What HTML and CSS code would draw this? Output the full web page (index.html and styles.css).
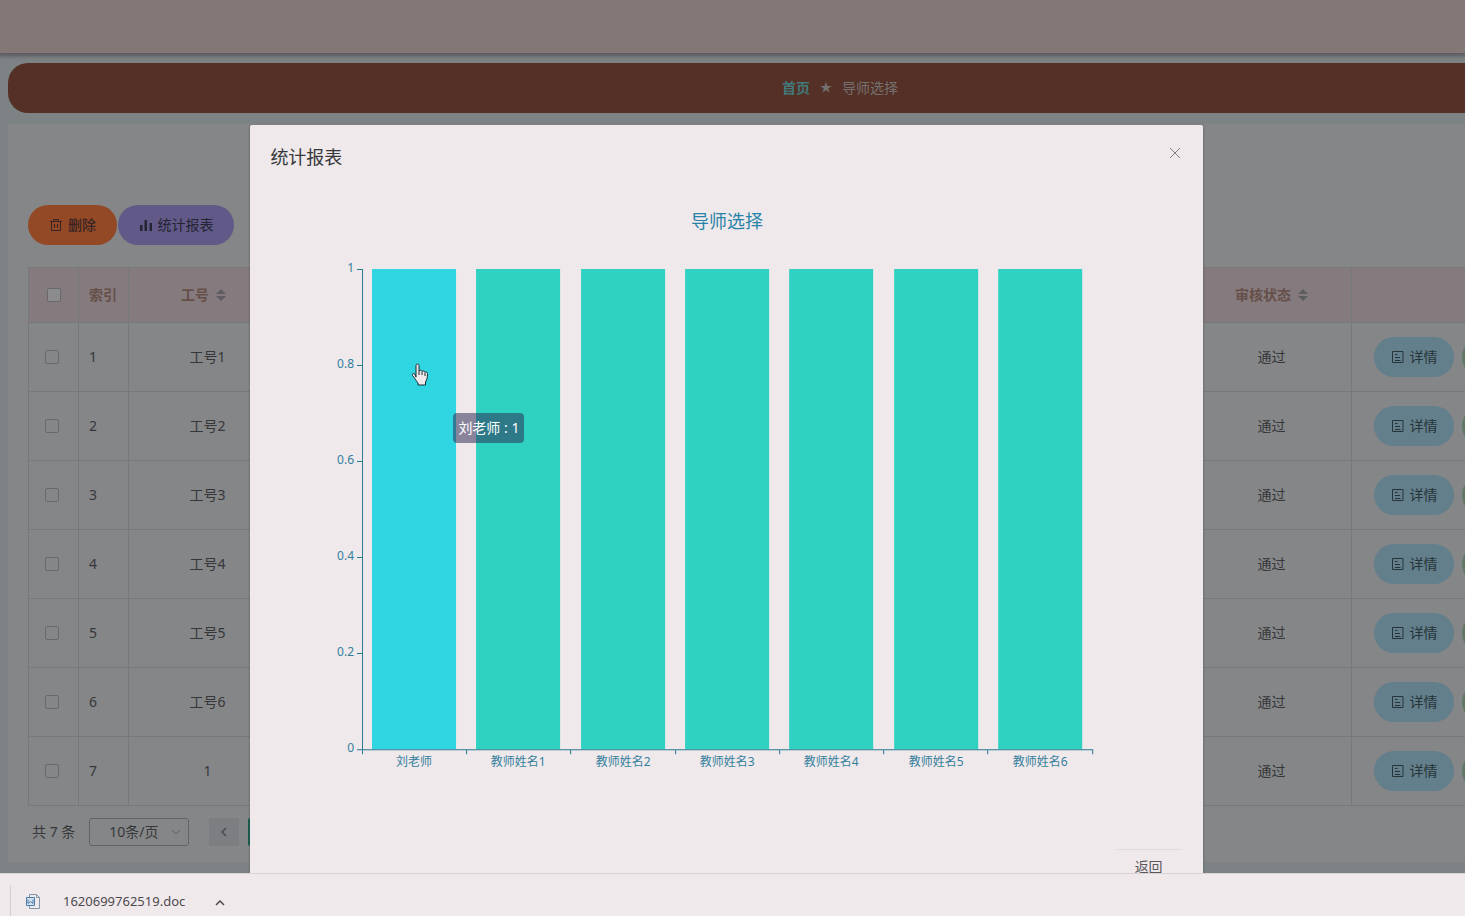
FILE: index.html
```html
<!DOCTYPE html>
<html lang="zh-CN">
<head>
<meta charset="utf-8">
<title>导师选择</title>
<link rel="stylesheet" href="styles.css">
</head>
<body>
<svg width="0" height="0" class="defs" aria-hidden="true">
  <symbol id="doc" viewBox="0 0 14 14"><path d="M1.500 1.500h10.500v11H1.500zM4 4.500h2.500M4 7.500h5M4 10.500h5.500" fill="none" stroke="currentColor"/></symbol>
  <symbol id="sort" viewBox="0 0 10 14"><path d="M0 6l5-5 5 5zM0 8l5 5 5-5z" fill="currentColor"/></symbol>
</svg>
<div class="viewport">
  <header class="topbar"></header>
  <main class="page">
    <nav class="crumbs"><a href="#" class="home">首页</a><span class="star">★</span><span>导师选择</span></nav>
    <section class="card">
      <div class="actions">
        <button class="btn delete"><svg width="14" height="14" viewBox="0 0 14 14"><path d="M1 3.500h12M4.500 3.500v-2h5v2M2.500 3.500v9h9v-9M5.500 6v4M8.500 6v4" fill="none" stroke="currentColor"/></svg>删除</button>
        <button class="btn report"><svg width="14" height="14" viewBox="0 0 14 14"><path d="M1 7h2.500v6H1zM5.500 2H8v11H5.500zM10.500 5H13v8h-2.500z" fill="currentColor"/></svg>统计报表</button>
      </div>
      <table class="grid">
        <colgroup><col class="c-check"><col class="c-index"><col class="c-no"><col><col class="c-state"><col class="c-ops"></colgroup>
        <thead><tr><th class="check"><input type="checkbox" aria-label="全选"></th><th class="index">索引</th><th class="no">工号<svg class="sort" width="10" height="14"><use href="#sort"/></svg></th><th></th><th>审核状态<svg class="sort" width="10" height="14"><use href="#sort"/></svg></th><th></th></tr></thead>
        <tbody>
          <tr><td class="check"><input type="checkbox" aria-label="1"></td><td class="index">1</td><td>工号1</td><td></td><td>通过</td><td class="ops"><div class="ops-row"><button class="btn detail"><svg width="14" height="14"><use href="#doc"/></svg>详情</button><button class="btn edit" aria-label="修改"></button></div></td></tr>
          <tr><td class="check"><input type="checkbox" aria-label="2"></td><td class="index">2</td><td>工号2</td><td></td><td>通过</td><td class="ops"><div class="ops-row"><button class="btn detail"><svg width="14" height="14"><use href="#doc"/></svg>详情</button><button class="btn edit" aria-label="修改"></button></div></td></tr>
          <tr><td class="check"><input type="checkbox" aria-label="3"></td><td class="index">3</td><td>工号3</td><td></td><td>通过</td><td class="ops"><div class="ops-row"><button class="btn detail"><svg width="14" height="14"><use href="#doc"/></svg>详情</button><button class="btn edit" aria-label="修改"></button></div></td></tr>
          <tr><td class="check"><input type="checkbox" aria-label="4"></td><td class="index">4</td><td>工号4</td><td></td><td>通过</td><td class="ops"><div class="ops-row"><button class="btn detail"><svg width="14" height="14"><use href="#doc"/></svg>详情</button><button class="btn edit" aria-label="修改"></button></div></td></tr>
          <tr><td class="check"><input type="checkbox" aria-label="5"></td><td class="index">5</td><td>工号5</td><td></td><td>通过</td><td class="ops"><div class="ops-row"><button class="btn detail"><svg width="14" height="14"><use href="#doc"/></svg>详情</button><button class="btn edit" aria-label="修改"></button></div></td></tr>
          <tr><td class="check"><input type="checkbox" aria-label="6"></td><td class="index">6</td><td>工号6</td><td></td><td>通过</td><td class="ops"><div class="ops-row"><button class="btn detail"><svg width="14" height="14"><use href="#doc"/></svg>详情</button><button class="btn edit" aria-label="修改"></button></div></td></tr>
          <tr><td class="check"><input type="checkbox" aria-label="7"></td><td class="index">7</td><td>1</td><td></td><td>通过</td><td class="ops"><div class="ops-row"><button class="btn detail"><svg width="14" height="14"><use href="#doc"/></svg>详情</button><button class="btn edit" aria-label="修改"></button></div></td></tr>
        </tbody>
      </table>
      <div class="pager">
        <span>共 7 条</span>
        <div class="size"><select aria-label="每页条数"><option>10条/页</option></select><svg width="10" height="6" viewBox="0 0 10 6"><path d="M1 1l4 4 4-4" fill="none" stroke="currentColor"/></svg></div>
        <button class="prev" aria-label="上一页"><svg width="8" height="10" viewBox="0 0 8 10"><path d="M6 1L2 5l4 4" fill="none" stroke="currentColor" stroke-width="1.500"/></svg></button>
        <button class="current" aria-label="第一页"></button>
      </div>
    </section>
  </main>

  <div class="modal" role="dialog" aria-labelledby="modal-title">
    <div class="modal-head">
      <h2 id="modal-title">统计报表</h2>
      <button class="close" aria-label="关闭"><svg width="12" height="12" viewBox="0 0 12 12"><path d="M1 1l10 10M11 1L1 11" stroke="currentColor"/></svg></button>
    </div>
    <div class="modal-body">
      <svg class="chart" viewBox="0 0 912 600" role="img" aria-label="导师选择">
        <text class="chart-title" x="457" y="19">导师选择</text>
        <rect class="bar active" x="102" y="60" width="84" height="480"/>
        <g class="bar">
          <rect x="206" y="60" width="84" height="480"/><rect x="311" y="60" width="84" height="480"/><rect x="415" y="60" width="84" height="480"/>
          <rect x="519" y="60" width="84" height="480"/><rect x="624" y="60" width="84" height="480"/><rect x="728" y="60" width="84" height="480"/>
        </g>
        <path class="axis" d="M92.500 60V545M87 60.500h5M87 156.500h5M87 252.500h5M87 348.500h5M87 444.500h5M87 540.500h736M196.500 540v5M300.500 540v5M405.500 540v5M509.500 540v5M613.500 540v5M717.500 540v5M822.500 540v5"/>
        <g class="values"><text x="84" y="63">1</text><text x="84" y="159">0.8</text><text x="84" y="255">0.6</text><text x="84" y="351">0.4</text><text x="84" y="447">0.2</text><text x="84" y="543">0</text></g>
        <g class="names"><text x="144" y="557">刘老师</text><text x="248" y="557">教师姓名1</text><text x="353" y="557">教师姓名2</text><text x="457" y="557">教师姓名3</text><text x="561" y="557">教师姓名4</text><text x="666" y="557">教师姓名5</text><text x="770" y="557">教师姓名6</text></g>
      </svg>
      <div class="tooltip">刘老师 : 1</div>
      <svg class="cursor" width="18" height="23" viewBox="0 0 18 23"><path d="M5 14V2.500c0-2 3-2 3 0V8c.5-1.200 2.700-1 3 .5.700-1 2.700-.6 2.800.8 1-.7 2.700-.2 2.700 1.200 0 4-.5 6-2 8.500V22H7v-2c-2-2-3-5-5.500-7.500-.8-1.500 1-2.700 2.200-1.500z" fill="#efe9eb" stroke="#172d35"/><path d="M8 8v4M11 9v3M14 10v3" stroke="#172d35"/></svg>
    </div>
    <div class="modal-foot"><button class="back">返回</button></div>
  </div>
</div>
<footer class="downloads">
  <a href="#" class="file"><svg width="15" height="17" viewBox="0 0 15 17"><path d="M3.500 4V1.500h7l3 3v11h-10V13M10.500 1.500v3h3" fill="none" stroke="#8297ac"/><path d="M.5 4.500h8v8h-8z" fill="#d3e1ee" stroke="#4d7dab"/><path d="M2 6.500v4l2.500-2 2.500 2v-4" fill="none" stroke="#4d7dab"/></svg>1620699762519.doc</a>
  <button class="more" aria-label="更多"><svg width="10" height="6" viewBox="0 0 10 6"><path d="M1 5l4-4 4 4" fill="none" stroke="currentColor" stroke-width="1.500"/></svg></button>
</footer>
</body>
</html>
```
FILE: styles.css
```css
* { box-sizing: border-box; }
body {
  margin: 0;
  height: 100vh;
  display: flex;
  flex-direction: column;
  overflow: hidden;
  font: 14px/20px "Noto Sans", "Noto Sans CJK SC", sans-serif;
  color: #36373a;
}
button, select, input { font: inherit; color: inherit; margin: 0; }
button { border: 0; padding: 0; background: none; }
a { color: inherit; text-decoration: none; }
.defs { position: absolute; }
.viewport { flex: 1; min-height: 0; position: relative; overflow: hidden; background: #7d8384; }
.topbar { height: 53px; background: #847877; box-shadow: 0 1px 4px 2px #58585d; }
.page { min-width: 1680px; padding: 10px 8px 0; }
.crumbs {
  height: 50px;
  display: flex;
  align-items: center;
  justify-content: center;
  gap: 10px;
  border-radius: 20px;
  background: #543026;
  color: #74706f;
}
.home { color: #42797b; font-weight: 700; }
.star { font-size: 12px; }
.card { margin-top: 11px; padding: 81px 20px 16px; background: #858687; }
.actions { display: flex; gap: 1px; margin-bottom: 22px; }
.btn {
  height: 40px;
  display: flex;
  align-items: center;
  justify-content: center;
  gap: 5px;
  border-radius: 20px;
}
.delete { width: 89px; background: #944926; color: #362324; font-weight: 500; }
.report { width: 116px; background: #615988; color: #252432; }
.grid {
  width: 100%;
  table-layout: fixed;
  border-collapse: separate;
  border-spacing: 0;
  border: 1px solid #77787a;
  border-width: 1px 0 0 1px;
  text-align: center;
}
.c-check, .c-index { width: 50px; }
.c-no { width: 158px; }
.c-state { width: 160px; }
.c-ops { width: 300px; }
.grid th, .grid td { padding: 0; border: 1px solid #77787a; border-width: 0 1px 1px 0; }
.grid th { height: 55px; background: #857b7f; color: #654f48; font-weight: 700; }
.grid td { height: 69px; }
.grid .index { text-align: left; padding-left: 10px; }
.grid td.check { padding-right: 4px; }
.grid .no { padding-right: 8px; }
.sort { margin-left: 7px; vertical-align: -2px; color: #5d5d61; }
.check input {
  appearance: none;
  display: block;
  width: 14px;
  height: 14px;
  margin: 0 auto;
  border: 1px solid #68696c;
  border-radius: 2px;
}
th.check input { background: #8c8c8e; }
.ops-row { display: flex; gap: 8px; padding-left: 22px; }
.detail { width: 80px; background: #637f8c; color: #26343a; }
.edit { width: 80px; background: #5f7965; }
.pager { display: flex; align-items: center; height: 28px; margin: 12px 0 0 4px; }
.size { position: relative; margin: 0 20px 0 14px; display: flex; align-items: center; }
.size select {
  appearance: none;
  width: 100px;
  height: 28px;
  padding: 0 19px;
  border: 1px solid #626467;
  border-radius: 3px;
  background: none;
}
.size svg { position: absolute; right: 8px; color: #5d5d61; }
.prev, .current { width: 30px; height: 28px; border-radius: 2px; background: #7d7e81; color: #4c4d50; }
.current { margin-left: 9px; background: #1d6050; }
.modal {
  position: absolute;
  top: 125px;
  left: 0;
  right: 12px;
  width: 65vw;
  margin: 0 auto;
  border-radius: 2px;
  background: #efe9eb;
  box-shadow: 0 1px 3px rgba(0, 0, 0, .3);
}
.modal-head { display: flex; justify-content: space-between; align-items: flex-start; padding: 20px 20px 10px; }
.modal-head h2 { margin: 0; font-size: 18px; line-height: 24px; font-weight: 400; }
.close { width: 16px; height: 16px; display: flex; align-items: center; justify-content: center; color: #858286; }
.modal-body { position: relative; padding: 30px 20px; }
.chart { display: block; width: 100%; font-size: 12px; }
.chart text { fill: #347f9d; text-anchor: middle; }
.chart .chart-title { font-size: 18px; fill: #2784a8; }
.chart .values text { text-anchor: end; }
.bar { fill: #2fd1c1; }
.bar.active { fill: #2fd6e1; }
.axis { fill: none; stroke: #287a91; }
.tooltip {
  position: absolute;
  left: 203px;
  top: 234px;
  padding: 5px;
  border-radius: 4px;
  background: rgba(45, 40, 85, .52);
  color: #fff;
}
.cursor { position: absolute; left: 161px; top: 184px; }
.modal-foot { display: flex; justify-content: flex-end; padding: 10px 22px 20px; }
.back { width: 64px; height: 34px; border-top: 1px solid #dfdbdd; color: #59575b; }
.downloads {
  height: 43px;
  display: flex;
  align-items: center;
  gap: 25px;
  padding: 12px 10px 0;
  border-top: 1px solid #d9d3d5;
  background: #f0e9eb;
  font-size: 13px;
  color: #4c4a4e;
}
.file { display: flex; align-items: center; gap: 22px; height: 32px; padding-left: 15px; border-left: 1px solid #d3ced0; }
.more { width: 20px; height: 20px; }
```
